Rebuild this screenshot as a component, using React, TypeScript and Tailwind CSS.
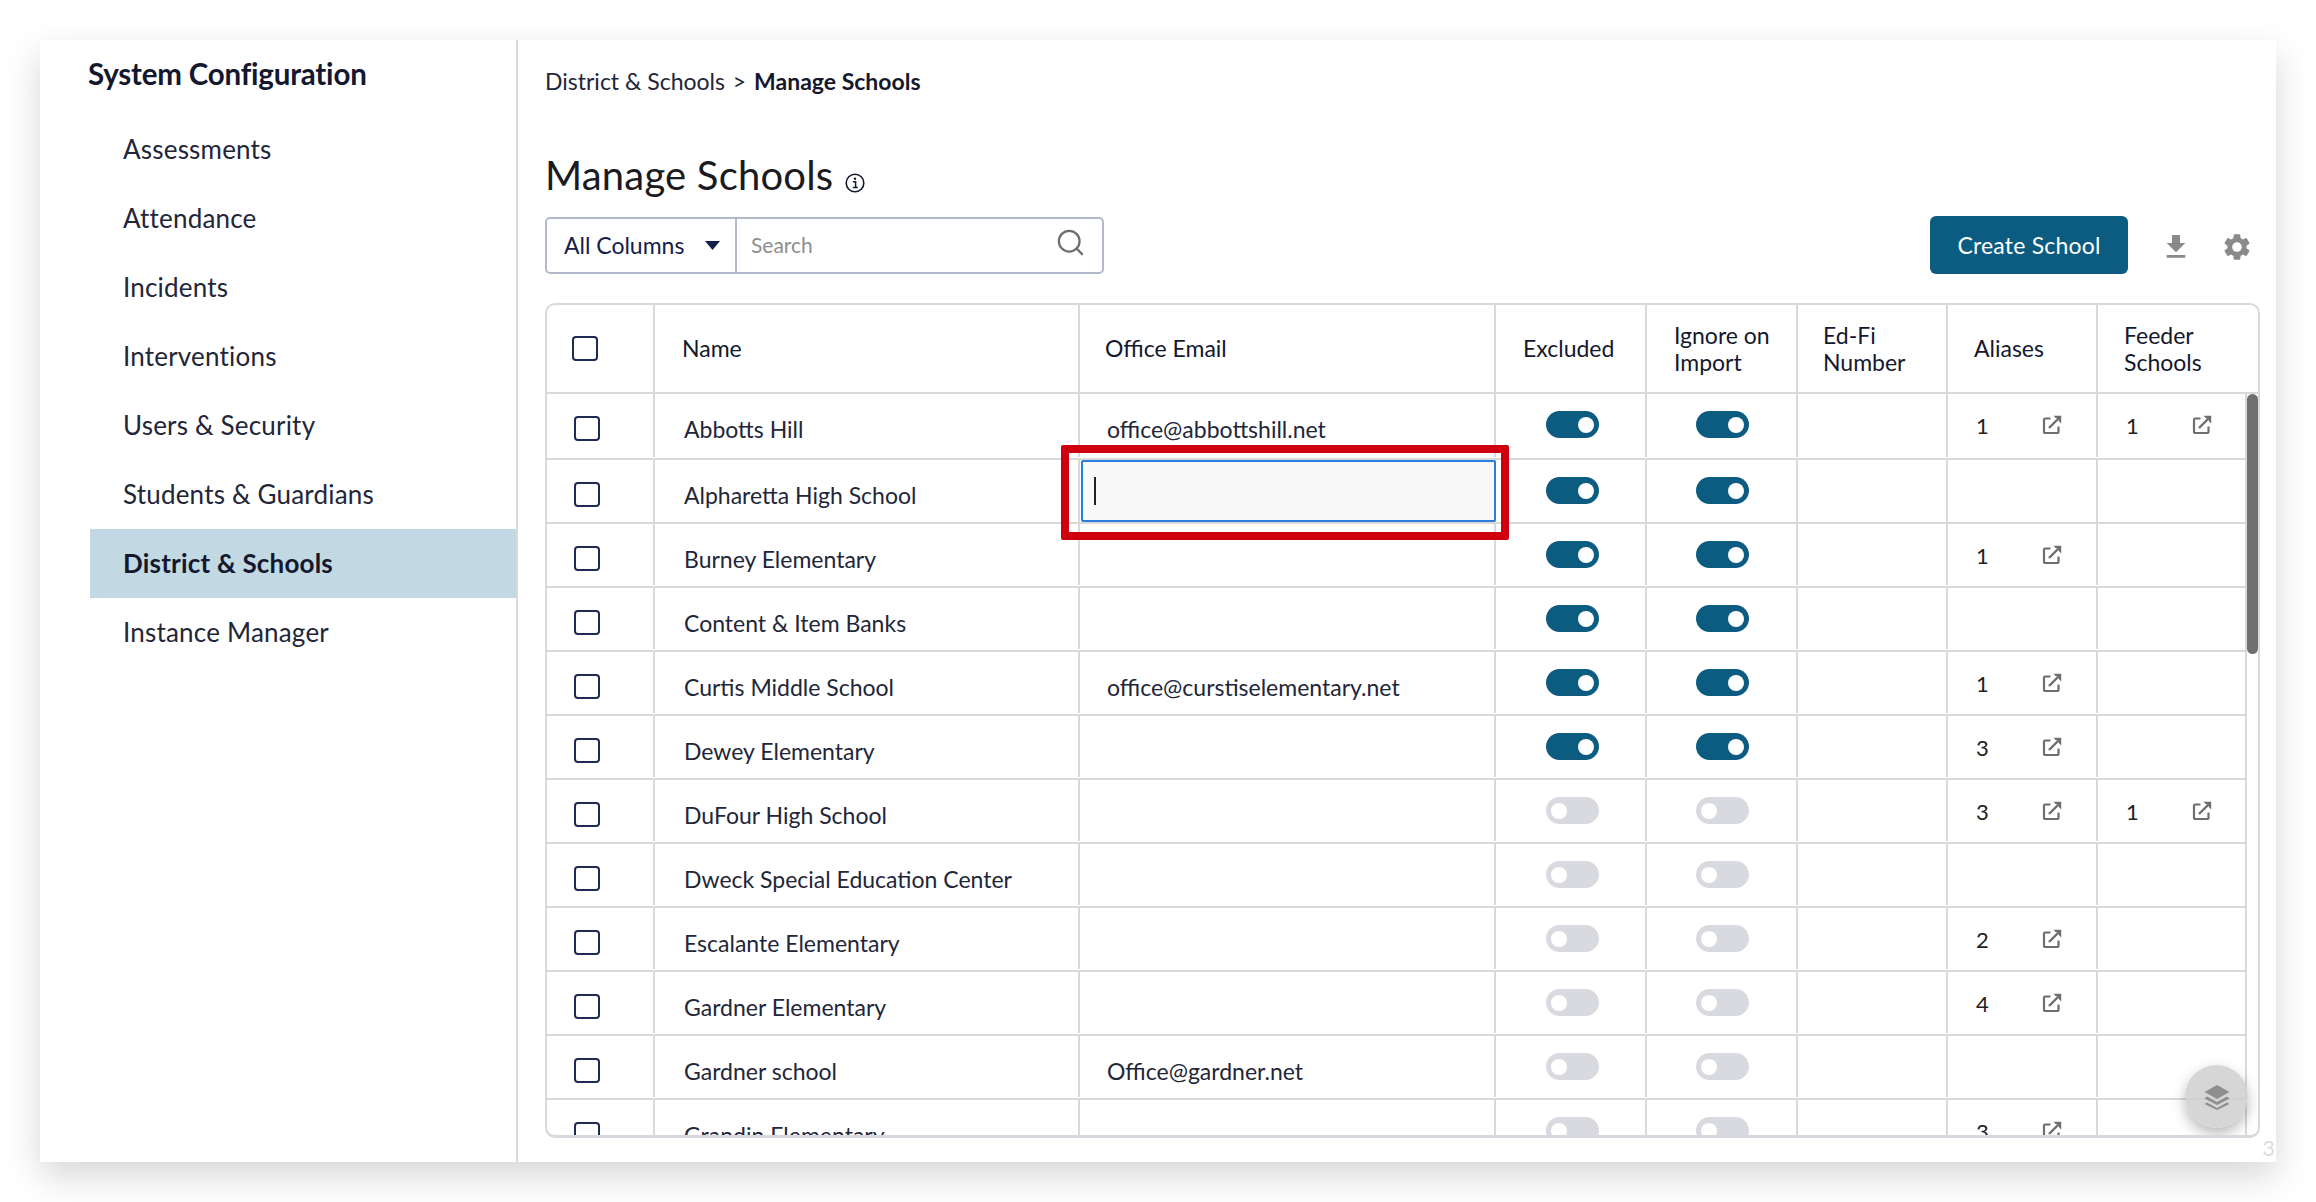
import React from 'react';
import { Search } from 'lucide-react';
import { MdFileDownload, MdSettings } from 'react-icons/md';

const navItems = [
  'Assessments',
  'Attendance',
  'Incidents',
  'Interventions',
  'Users & Security',
  'Students & Guardians',
  'District & Schools',
  'Instance Manager',
];

const schools = [
  { name: 'Abbotts Hill', email: 'office@abbottshill.net', on: true, aliases: '1', feeder: '1' },
  { name: 'Alpharetta High School', email: '', on: true, aliases: '', feeder: '', editing: true },
  { name: 'Burney Elementary', email: '', on: true, aliases: '1', feeder: '' },
  { name: 'Content & Item Banks', email: '', on: true, aliases: '', feeder: '' },
  { name: 'Curtis Middle School', email: 'office@curstiselementary.net', on: true, aliases: '1', feeder: '' },
  { name: 'Dewey Elementary', email: '', on: true, aliases: '3', feeder: '' },
  { name: 'DuFour High School', email: '', on: false, aliases: '3', feeder: '1' },
  { name: 'Dweck Special Education Center', email: '', on: false, aliases: '', feeder: '' },
  { name: 'Escalante Elementary', email: '', on: false, aliases: '2', feeder: '' },
  { name: 'Gardner Elementary', email: '', on: false, aliases: '4', feeder: '' },
  { name: 'Gardner school', email: 'Office@gardner.net', on: false, aliases: '', feeder: '' },
  { name: 'Grandin Elementary', email: '', on: false, aliases: '3', feeder: '' },
];

function Checkbox() {
  return <div className="w-[26px] h-[25px] rounded-[4px] border-2 border-[#1e2a54] bg-white" />;
}

function Toggle({ on }: { on: boolean }) {
  if (on) {
    return (
      <div className="w-[53px] h-[27px] rounded-full bg-[#0b5c80] flex items-center justify-end pr-[5px]">
        <div className="w-[16px] h-[16px] rounded-full bg-white" />
      </div>
    );
  }
  return (
    <div className="w-[53px] h-[27px] rounded-full bg-[#d9dae0] flex items-center pl-[5px]">
      <div className="w-[16px] h-[16px] rounded-full bg-white" />
    </div>
  );
}

function OpenIcon() {
  return (
    <svg className="w-[20px] h-[20px] mt-[7px] ml-[3px]" viewBox="0 0 20 20" fill="none">
      <path d="M8.500 3.500H3.200A1.200 1.200 0 0 0 2 4.700v12.100A1.200 1.200 0 0 0 3.200 18h12.100a1.200 1.200 0 0 0 1.200-1.200V11.500" stroke="#6e6e6e" strokeWidth="2.200" />
      <path d="M7 13 17 3" stroke="#6e6e6e" strokeWidth="2.400" />
      <path d="M11.500 .8H19.200V8.500L16.700 6V3.300H14z" fill="#6e6e6e" />
    </svg>
  );
}

function CountCell({ value, last }: { value: string; last?: boolean }) {
  return (
    <div className={`flex items-start pt-[14px] pl-[28px] ${last ? '' : 'border-r-2 border-[#d9d9d9]'}`}>
      {value && (
        <>
          <span className="w-[63px] text-[22px] leading-[36px] text-[#222222]">{value}</span>
          <OpenIcon />
        </>
      )}
    </div>
  );
}

export default function App() {
  return (
    <div className="w-[2316px] h-[1202px] bg-white p-[40px] overflow-hidden font-['Lato',sans-serif]">
      <div className="relative flex h-[1122px] w-[2236px] bg-white shadow-[0_14px_34px_rgba(0,0,0,0.16)]">
        <aside className="w-[478px] shrink-0 border-r-2 border-[#d9d9de] pt-[18px]">
          <h2 className="pl-[48px] h-[32px] mb-[25px] text-[29.5px] leading-[32px] font-bold text-[#14182e] tracking-[-0.2px]">
            System Configuration
          </h2>
          <nav className="ml-[50px]">
            {navItems.map((item) => (
              <div
                key={item}
                className={`h-[69px] pl-[33px] flex items-center text-[26px] tracking-[0.2px] ${
                  item === 'District & Schools' ? 'bg-[#c2d8e2] font-bold text-[#14182e]' : 'text-[#222638]'
                }`}
              >
                {item}
              </div>
            ))}
          </nav>
        </aside>

        <main className="flex-1 pl-[27px] pr-[16px] pt-[28px] min-w-0">
          <div className="h-[26px] text-[23px] leading-[26px] text-[#222638]">
            District &amp; Schools <span className="mx-[2px]">&gt;</span> <span className="font-bold text-[#14182e]">Manage Schools</span>
          </div>

          <div className="mt-[57px] h-[48px] flex items-center">
            <h1 className="text-[40px] leading-[48px] text-[#1a1a1f] tracking-[0.2px]">Manage Schools</h1>
            <svg className="w-[20px] h-[20px] ml-[12px] mt-[16px]" viewBox="0 0 20 20" fill="none">
              <circle cx="10" cy="10" r="8.8" stroke="#14182e" strokeWidth="1.6" />
              <circle cx="10" cy="5.800" r="1.200" fill="#14182e" />
              <path d="M7.800 8.800h2.800v5.400M7.800 14.600h5" stroke="#14182e" strokeWidth="1.500" />
            </svg>
          </div>

          <div className="mt-[17px] h-[58px] flex items-center">
            <div className="w-[559px] h-[57px] flex border-2 border-[#b3b8cc] rounded-[5px]">
              <div className="w-[190px] shrink-0 border-r-2 border-[#b3b8cc] flex items-center pl-[17px] text-[23px] text-[#14204a]">
                All Columns
                <svg className="ml-[21px] w-[15px] h-[9px]" viewBox="0 0 15 9">
                  <path d="M0 0h15L7.5 9z" fill="#14204a" />
                </svg>
              </div>
              <div className="flex-1 flex items-center pl-[13px] pr-[16px] justify-between text-[21px] text-[#8e8e8e]">
                <span className="ml-[1px]">Search</span>
                <Search className="w-[31px] h-[31px] text-[#6e6e6e] -mt-[5px]" strokeWidth={1.75} />
              </div>
            </div>
            <button className="ml-auto w-[198px] h-[58px] rounded-[6px] bg-[#0b5c80] text-white text-[23px] tracking-[0.2px]">
              Create School
            </button>
            <MdFileDownload className="ml-[32px] mt-[3px] w-[32px] h-[32px] text-[#8a8a8a]" />
            <MdSettings className="ml-[29px] mr-[7px] mt-[3px] w-[32px] h-[32px] text-[#8a8a8a]" />
          </div>

          <div className="relative mt-[29px] h-[835px] border-2 border-b-[3px] border-[#d8d8de] rounded-[10px] overflow-hidden">
            <div className="grid grid-cols-[108px_425px_416px_151px_151px_150px_150px_1fr] h-[89px] border-b-2 border-[#d9d9d9] text-[23px] leading-[27px] text-[#14182e]">
              <div className="border-r-2 border-[#d9d9d9] flex items-center pl-[25px]">
                <Checkbox />
              </div>
              <div className="border-r-2 border-[#d9d9d9] flex items-center pl-[27px]">Name</div>
              <div className="border-r-2 border-[#d9d9d9] flex items-center pl-[25px]">Office Email</div>
              <div className="border-r-2 border-[#d9d9d9] flex items-center pl-[27px]">Excluded</div>
              <div className="border-r-2 border-[#d9d9d9] flex items-center pl-[27px]">Ignore on<br />Import</div>
              <div className="border-r-2 border-[#d9d9d9] flex items-center pl-[25px]">Ed-Fi<br />Number</div>
              <div className="border-r-2 border-[#d9d9d9] flex items-center pl-[26px]">Aliases</div>
              <div className="flex items-center pl-[26px]">Feeder<br />Schools</div>
            </div>

            <div className="flex">
              <div className="flex-1 min-w-0">
                {schools.map((s, i) => (
                  <div
                    key={s.name}
                    className={`grid grid-cols-[108px_425px_416px_151px_151px_150px_150px_1fr] border-b-2 border-[#d9d9d9] text-[23px] text-[#222638] [&>div]:mb-[1px] ${
                      i === 0 ? 'h-[66px]' : 'h-[64px]'
                    }`}
                  >
                    <div className="border-r-2 border-[#d9d9d9] pl-[27px] pt-[22px]">
                      <Checkbox />
                    </div>
                    <div className="border-r-2 border-[#d9d9d9] pl-[29px] pt-[17px] leading-[36px] whitespace-nowrap">{s.name}</div>
                    {s.editing ? (
                      <div className="border-r-2 border-[#d9d9d9] pl-[1px]">
                        <div className="h-[62px] -mr-[2px] border-2 border-[#2b7de0] rounded-[2px] bg-[#f9f9f9] flex items-center pl-[11px]">
                          <div className="w-[2px] h-[28px] bg-[#222222]" />
                        </div>
                      </div>
                    ) : (
                      <div className="border-r-2 border-[#d9d9d9] pl-[27px] pt-[17px] leading-[36px] whitespace-nowrap">{s.email}</div>
                    )}
                    <div className="border-r-2 border-[#d9d9d9] pl-[50px] pt-[17px]">
                      <Toggle on={s.on} />
                    </div>
                    <div className="border-r-2 border-[#d9d9d9] pl-[49px] pt-[17px]">
                      <Toggle on={s.on} />
                    </div>
                    <div className="border-r-2 border-[#d9d9d9]" />
                    <CountCell value={s.aliases} />
                    <CountCell value={s.feeder} last />
                  </div>
                ))}
              </div>
              <div className="w-[13px] shrink-0 border-l-2 border-[#d9d9d9]">
                <div className="w-[11px] h-[260px] rounded-full bg-[#707070]" />
              </div>
            </div>

            <div className="absolute right-[10px] bottom-[7px] w-[63px] h-[63px] rounded-full bg-[#cfcfcf]/85 shadow-[0_6px_14px_rgba(0,0,0,0.28)] flex items-center justify-center">
              <svg className="w-[26px] h-[26px]" viewBox="0 0 26 26" fill="#8e8e8e">
                <path d="M13 1 25.5 8 13 15 .5 8z" />
                <path d="M3 12.5 13 18l10-5.5 2.5 2L13 21 .5 14.5z" />
                <path d="M3 18.5 13 24l10-5.500 2.500 1.500L13 26 .5 20z" />
              </svg>
            </div>
          </div>
        </main>

        <span className="absolute right-[1px] bottom-[2px] text-[22px] leading-[24px] text-[#dcdcdc]">3</span>

        <div className="absolute left-[1021px] top-[405px] w-[448px] h-[95px] border-[8px] border-[#cf000f] rounded-[2px]" />
      </div>
    </div>
  );
}
